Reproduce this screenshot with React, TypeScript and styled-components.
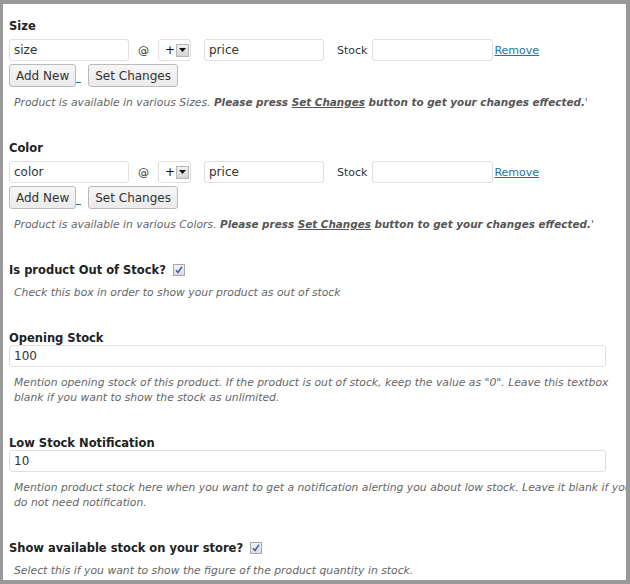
import styled, { createGlobalStyle } from 'styled-components'

const GlobalStyle = createGlobalStyle`
  html, body {
    margin: 0;
    padding: 0;
    background: #fff;
  }
  body {
    font-family: "DejaVu Sans", Verdana, sans-serif;
    color: #222;
  }
`

type Variant = {
  title: string
  placeholder: string
  noun: string
}

const variants: Variant[] = [
  { title: 'Size', placeholder: 'size', noun: 'Sizes' },
  { title: 'Color', placeholder: 'color', noun: 'Colors' },
]

export default function App() {
  return (
    <>
      <GlobalStyle />
      <Frame>
        <Content>
          {variants.map((v) => (
            <Section key={v.title}>
              <Label>{v.title}</Label>
              <VariantRow>
                <TextInput $width={120} defaultValue={v.placeholder} />
                <At>@</At>
                <Select>
                  <span>+</span>
                  <DropButton>
                    <svg width="7" height="4" viewBox="0 0 7 4">
                      <path d="M0 0h7L3.5 4z" fill="#111" />
                    </svg>
                  </DropButton>
                </Select>
                <TextInput $width={120} defaultValue="price" />
                <StockLabel>Stock</StockLabel>
                <TextInput $width={121} />
                <RemoveLink href="#">Remove</RemoveLink>
              </VariantRow>
              <ButtonRow>
                <ButtonLink href="#">
                  <Button>Add New</Button>
                  <Trail> </Trail>
                </ButtonLink>
                <Button>Set Changes</Button>
              </ButtonRow>
              <Help>
                Product is available in various {v.noun}.{' '}
                <strong>
                  Please press <u>Set Changes</u> button to get your changes effected.
                </strong>
                '
              </Help>
            </Section>
          ))}

          <Section>
            <Label>
              Is product Out of Stock? <Checkbox />
            </Label>
            <Help>Check this box in order to show your product as out of stock</Help>
          </Section>

          <Section>
            <Label>Opening Stock</Label>
            <WideInput defaultValue="100" />
            <Help>
              Mention opening stock of this product. If the product is out of stock, keep the
              value as "0". Leave this textbox blank if you want to show the stock as unlimited.
            </Help>
          </Section>

          <Section>
            <Label>Low Stock Notification</Label>
            <WideInput defaultValue="10" />
            <Help>
              Mention product stock here when you want to get a notification alerting you about
              low stock. Leave it blank if you do not need notification.
            </Help>
          </Section>

          <Section>
            <Label>
              Show available stock on your store? <Checkbox />
            </Label>
            <Help>Select this if you want to show the figure of the product quantity in stock.</Help>
          </Section>
        </Content>
      </Frame>
    </>
  )
}

function Checkbox() {
  return (
    <CheckBox>
      <svg width="10" height="10" viewBox="0 0 10 10">
        <path d="M2 5.2l2 2.3L8 1.8" stroke="#3b5fb0" strokeWidth="1.5" fill="none" />
      </svg>
    </CheckBox>
  )
}

const Frame = styled.div`
  box-sizing: border-box;
  width: 630px;
  height: 584px;
  border-style: solid;
  border-color: #999;
  border-width: 4px 4px 4px 3px;
  background: #fff;
  overflow: hidden;
`

const Content = styled.div`
  width: 628px;
  padding: 15px 0 0 6px;
`

const Section = styled.div`
  & + & {
    margin-top: 31px;
  }
`

const Label = styled.div`
  display: flex;
  align-items: center;
  gap: 7px;
  height: 14px;
  font-size: 11.5px;
  line-height: 14px;
  font-weight: bold;
  color: #222;
`

const VariantRow = styled.div`
  display: flex;
  align-items: center;
  margin-top: 6px;
  height: 22px;
`

const TextInput = styled.input<{ $width: number }>`
  box-sizing: border-box;
  width: ${({ $width }) => $width}px;
  height: 22px;
  padding: 0 4px;
  border: 1px solid #dfdfdf;
  border-radius: 3px;
  background: #fff;
  font-family: "DejaVu Sans", Verdana, sans-serif;
  font-size: 12px;
  color: #333;
  outline: none;
`

const WideInput = styled(TextInput).attrs({ $width: 597 })`
  display: block;
`

const At = styled.span`
  margin: 0 9px 0 9px;
  font-size: 11px;
  color: #333;
`

const Select = styled.div`
  box-sizing: border-box;
  display: flex;
  align-items: center;
  width: 33px;
  height: 22px;
  padding-left: 6px;
  margin-right: 13px;
  border: 1px solid #dfdfdf;
  border-radius: 3px;
  font-size: 12px;
  color: #111;
`

const DropButton = styled.span`
  box-sizing: border-box;
  display: flex;
  align-items: center;
  justify-content: center;
  width: 13px;
  height: 13px;
  margin-left: 1px;
  border: 1px solid #b5b5b5;
  background: linear-gradient(#f0f0f0, #d4d4d4);
`

const StockLabel = styled.span`
  margin: 0 5px 0 13px;
  font-size: 11px;
  color: #333;
`

const RemoveLink = styled.a`
  margin-left: 1px;
  font-size: 11px;
  color: #21759b;
  text-decoration: underline;
`

const ButtonRow = styled.div`
  display: flex;
  align-items: center;
  margin-top: 3px;
  height: 23px;
`

const ButtonLink = styled.a`
  display: flex;
  align-items: center;
  margin-right: 7px;
  text-decoration: none;
`

const Trail = styled.span`
  display: inline-block;
  width: 5px;
  height: 10px;
  border-bottom: 1px solid #21759b;
  margin-top: 4px;
`

const Button = styled.button`
  box-sizing: border-box;
  height: 23px;
  padding: 0 6px;
  border: 1px solid #bbb;
  border-radius: 3px;
  background: linear-gradient(#f6f6f6, #ebebeb);
  font-family: "DejaVu Sans", Verdana, sans-serif;
  font-size: 12px;
  color: #333;
`

const Help = styled.p`
  margin: 8px 0 0;
  padding-left: 5px;
  font-size: 10.8px;
  line-height: 15px;
  font-style: italic;
  color: #666;

  strong {
    font-size: 10.4px;
    color: #555;
  }
  u {
    text-decoration: underline;
  }
`

const CheckBox = styled.span`
  box-sizing: border-box;
  display: inline-flex;
  align-items: center;
  justify-content: center;
  width: 12px;
  height: 12px;
  border: 1px solid #a8a8a8;
  background: linear-gradient(#f4f4f4, #dcdcdc);
`
